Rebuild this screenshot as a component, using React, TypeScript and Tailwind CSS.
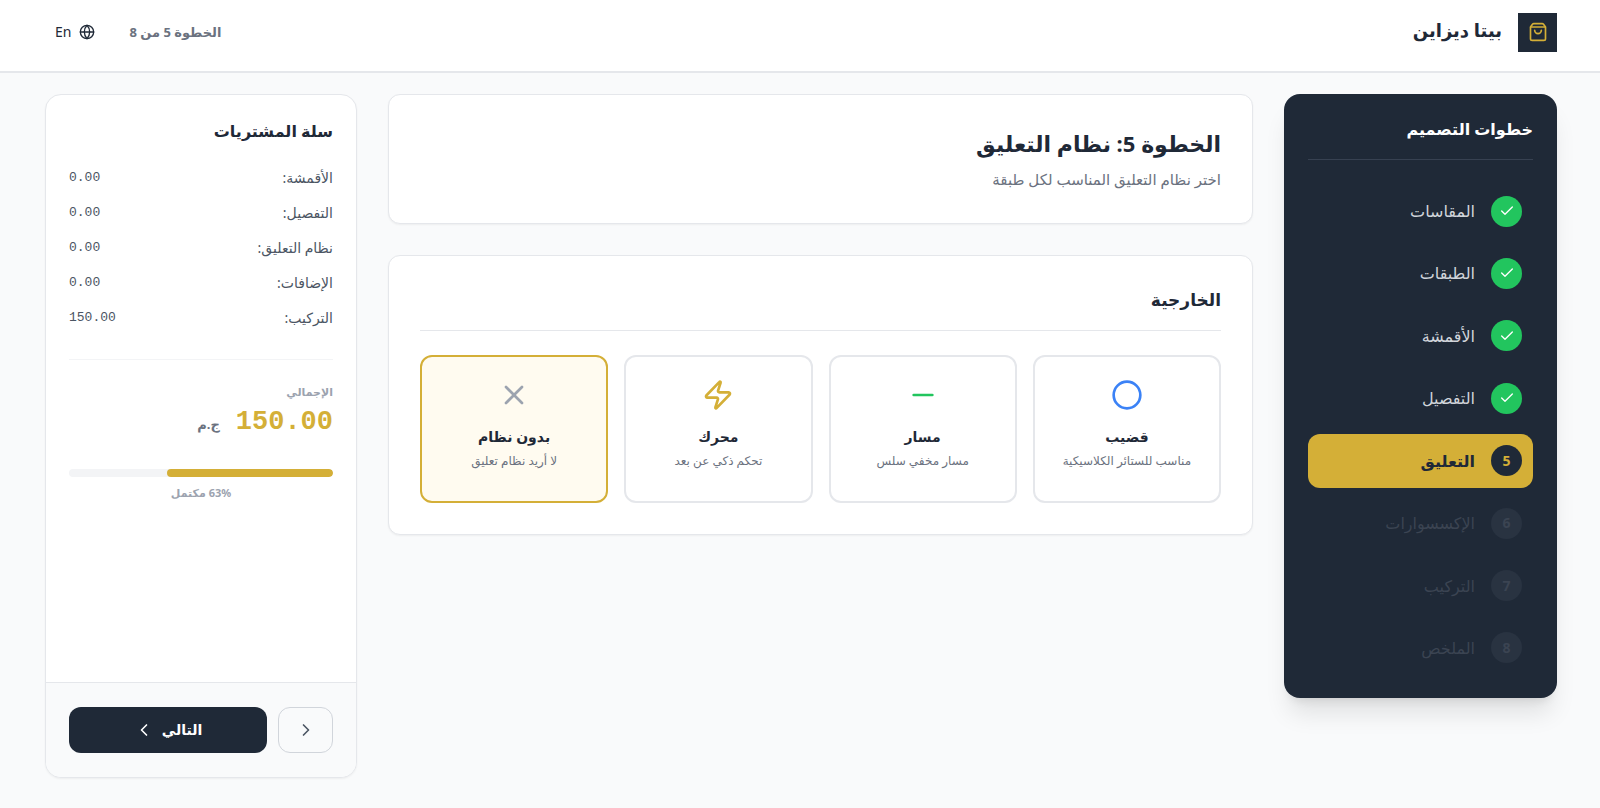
import { useState } from 'react';
import {
  Check,
  ChevronLeft,
  ChevronRight,
  Circle,
  Globe,
  Minus,
  ShoppingBag,
  X,
  Zap,
  type LucideIcon
} from 'lucide-react';

interface SystemOption {
  id: string;
  title: string;
  description: string;
  icon: LucideIcon;
  iconClass: string;
}

const CURRENT_STEP = 5;

const steps = [
  'المقاسات',
  'الطبقات',
  'الأقمشة',
  'التفصيل',
  'التعليق',
  'الإكسسوارات',
  'التركيب',
  'الملخص'
];

const options: SystemOption[] = [
  {
    id: 'rod',
    title: 'قضيب',
    description: 'مناسب للستائر الكلاسيكية',
    icon: Circle,
    iconClass: 'text-[#3b82f6]'
  },
  {
    id: 'track',
    title: 'مسار',
    description: 'مسار مخفي سلس',
    icon: Minus,
    iconClass: 'text-[#22c55e]'
  },
  {
    id: 'motor',
    title: 'محرك',
    description: 'تحكم ذكي عن بعد',
    icon: Zap,
    iconClass: 'text-[#d4af37]'
  },
  {
    id: 'none',
    title: 'بدون نظام',
    description: 'لا أريد نظام تعليق',
    icon: X,
    iconClass: 'text-[#9ca3af]'
  }
];

const costs = [
  { label: 'الأقمشة:', value: '0.00' },
  { label: 'التفصيل:', value: '0.00' },
  { label: 'نظام التعليق:', value: '0.00' },
  { label: 'الإضافات:', value: '0.00' },
  { label: 'التركيب:', value: '150.00' }
];

function Header() {
  return (
    <header className="border-b-2 border-[#e5e7eb] bg-white">
      <div className="flex h-[71px] items-center justify-between px-[43px] pb-[7px]">
        <div className="flex items-center gap-4">
          <div className="flex size-[39px] items-center justify-center bg-[#1f2937] text-[#d4af37]">
            <ShoppingBag size={20} />
          </div>
          <span className="pb-1 text-[18px] leading-7 font-bold">بيتا ديزاين</span>
        </div>
        <div className="flex items-center gap-[22px]">
          <span className="text-[13px] leading-5 font-bold text-[#6b7280]">
            الخطوة 5 من 8
          </span>
          <button
            type="button"
            className="flex items-center gap-2 px-3 py-2 text-sm text-[#1f2937]"
          >
            <Globe size={16} />
            En
          </button>
        </div>
      </div>
    </header>
  );
}

function StepItem({ label, number }: { label: string; number: number }) {
  const done = number < CURRENT_STEP;
  const active = number === CURRENT_STEP;

  let itemClass = 'text-[#d1d5db]';
  let badgeClass = 'bg-[#22c55e] text-white';
  if (active) {
    itemClass = 'bg-[#d4af37] font-bold text-[#1f2937]';
    badgeClass = 'bg-[#1f2937] text-[#d4af37]';
  } else if (!done) {
    itemClass = 'text-[#3b4452]';
    badgeClass = 'bg-[#293341] text-[#3b4452]';
  }

  return (
    <li>
      <button
        type="button"
        disabled={!done && !active}
        aria-current={active ? 'step' : undefined}
        className={`flex h-[54px] w-full items-center gap-4 rounded-xl px-[11px] text-base ${itemClass}`}
      >
        <span
          className={`flex size-[31px] items-center justify-center rounded-full text-sm font-bold ${badgeClass}`}
        >
          {done ? <Check size={16} /> : number}
        </span>
        {label}
      </button>
    </li>
  );
}

function StepsSidebar() {
  return (
    <aside className="w-[273px] shrink-0 self-start rounded-2xl bg-[#1f2937] px-6 pt-[21px] pb-[23px] shadow-xl">
      <h2 className="border-b border-[#374151] pb-4 text-base leading-7 font-bold text-white">
        خطوات التصميم
      </h2>
      <ol className="mt-6 flex min-h-[491px] flex-col justify-between">
        {steps.map((label, index) => (
          <StepItem key={label} label={label} number={index + 1} />
        ))}
      </ol>
    </aside>
  );
}

interface OptionCardProps {
  option: SystemOption;
  selected: boolean;
  onSelect: () => void;
}

function OptionCard({ option, selected, onSelect }: OptionCardProps) {
  const Icon = option.icon;

  return (
    <button
      type="button"
      aria-pressed={selected}
      onClick={onSelect}
      className={`flex min-h-[148px] flex-col items-center rounded-xl border-2 px-2 pt-[22px] ${
        selected ? 'border-[#d4af37] bg-[#fffbf0]' : 'border-[#e5e7eb] bg-white'
      }`}
    >
      <Icon size={32} className={option.iconClass} />
      <span className="mt-[14px] text-sm leading-6 font-bold">{option.title}</span>
      <span className="mt-1 text-xs leading-4 text-[#6b7280]">
        {option.description}
      </span>
    </button>
  );
}

function CartPanel() {
  const progress = Math.round((CURRENT_STEP / steps.length) * 100);

  return (
    <aside className="flex w-[312px] shrink-0 flex-col overflow-hidden rounded-2xl border border-[#e5e7eb] bg-white shadow-xs">
      <div className="flex-1 px-[23px] pt-[22px]">
        <h2 className="text-base leading-7 font-bold">سلة المشتريات</h2>
        <dl className="mt-[23px] flex flex-col gap-[15px] border-b border-[#f3f4f6] pb-[31px] text-sm leading-5 text-[#4b5563]">
          {costs.map((cost) => (
            <div key={cost.label} className="flex justify-between">
              <dt>{cost.label}</dt>
              <dd className="font-['Liberation_Mono',monospace] text-[13px] leading-5">
                {cost.value}
              </dd>
            </div>
          ))}
        </dl>

        <p className="mt-6 text-[11px] leading-4 font-bold text-[#9ca3af]">الإجمالي</p>
        <p className="mt-1 flex items-baseline gap-4">
          <span className="font-['Liberation_Mono',monospace] text-[27px] leading-9 font-bold text-[#d4af37]">
            150.00
          </span>
          <span className="text-[13px] leading-5 font-bold text-[#6b7280]">ج.م</span>
        </p>

        <div
          role="progressbar"
          aria-valuenow={progress}
          aria-valuemin={0}
          aria-valuemax={100}
          className="mt-[29px] h-2 overflow-hidden rounded-full bg-[#f3f4f6]"
        >
          <div
            className="h-full rounded-full bg-[#d4af37]"
            style={{ width: `${progress}%` }}
          />
        </div>
        <p className="mt-2 text-center text-[11px] leading-4 font-bold text-[#9ca3af]">
          {`${progress}% مكتمل`}
        </p>
      </div>

      <div className="flex gap-[11px] border-t border-[#e5e7eb] bg-[#f9fafb] px-[23px] py-6">
        <button
          type="button"
          aria-label="السابق"
          className="flex h-[46px] w-[55px] items-center justify-center rounded-xl border border-[#d1d5db] text-[#4b5563]"
        >
          <ChevronRight size={20} />
        </button>
        <button
          type="button"
          className="flex h-[46px] flex-1 items-center justify-center gap-2 rounded-xl bg-[#1f2937] text-sm font-bold text-white"
        >
          التالي
          <ChevronLeft size={20} />
        </button>
      </div>
    </aside>
  );
}

export default function App() {
  const [selected, setSelected] = useState('none');

  return (
    <div
      dir="rtl"
      lang="ar"
      className="flex min-h-screen flex-col bg-[#f9fafb] font-['Noto_Sans','DejaVu_Sans',sans-serif] text-[#1f2937]"
    >
      <Header />
      <main className="flex flex-1 gap-[31px] pt-[21px] pr-[43px] pb-[30px] pl-[45px]">
        <StepsSidebar />

        <div className="flex min-w-0 flex-1 flex-col gap-[31px]">
          <section className="rounded-xl border border-[#e5e7eb] bg-white px-[31px] py-[30px] shadow-xs">
            <h1 className="text-[22px] leading-9 font-bold">الخطوة 5: نظام التعليق</h1>
            <p className="mt-1 text-[15px] leading-7 text-[#6b7280]">
              اختر نظام التعليق المناسب لكل طبقة
            </p>
          </section>

          <section className="rounded-xl border border-[#e5e7eb] bg-white px-[31px] pt-[30px] pb-[31px] shadow-xs">
            <h2 className="border-b border-[#e5e7eb] pb-4 text-[17px] leading-7 font-bold">
              الخارجية
            </h2>
            <div className="mt-6 grid grid-cols-4 gap-4">
              {options.map((option) => (
                <OptionCard
                  key={option.id}
                  option={option}
                  selected={option.id === selected}
                  onSelect={() => setSelected(option.id)}
                />
              ))}
            </div>
          </section>
        </div>

        <CartPanel />
      </main>
    </div>
  );
}
